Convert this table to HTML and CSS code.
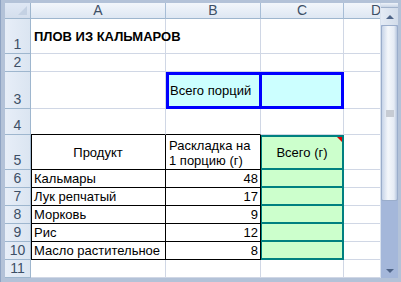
FILE: index.html
```html
<!DOCTYPE html>
<html>
<head>
<meta charset="utf-8">
<link rel="stylesheet" href="styles.css">
</head>
<body>
<div class="window">
  <div class="sheet">
    <div class="corner"><span class="tri"></span></div>
    <div class="ch">A</div>
    <div class="ch">B</div>
    <div class="ch">C</div>
    <div class="ch chd">D</div>

    <div class="rh r1">1</div>
    <div class="c title">ПЛОВ ИЗ КАЛЬМАРОВ</div>
    <div class="c"></div>
    <div class="c"></div>
    <div class="c"></div>

    <div class="rh">2</div>
    <div class="c"></div>
    <div class="c"></div>
    <div class="c"></div>
    <div class="c"></div>

    <div class="rh">3</div>
    <div class="c"></div>
    <div class="c blue bl">Всего порций</div>
    <div class="c blue br"></div>
    <div class="c"></div>

    <div class="rh">4</div>
    <div class="c bb"></div>
    <div class="c bb"></div>
    <div class="c"></div>
    <div class="c"></div>

    <div class="rh">5</div>
    <div class="c t ta center">Продукт</div>
    <div class="c t wrap">Раскладка на 1 порцию (г)</div>
    <div class="c g gtop center">Всего (г)<span class="note"></span></div>
    <div class="c"></div>

    <div class="rh">6</div>
    <div class="c t ta">Кальмары</div>
    <div class="c t num">48</div>
    <div class="c g"></div>
    <div class="c"></div>

    <div class="rh">7</div>
    <div class="c t ta">Лук репчатый</div>
    <div class="c t num">17</div>
    <div class="c g"></div>
    <div class="c"></div>

    <div class="rh">8</div>
    <div class="c t ta">Морковь</div>
    <div class="c t num">9</div>
    <div class="c g"></div>
    <div class="c"></div>

    <div class="rh">9</div>
    <div class="c t ta">Рис</div>
    <div class="c t num">12</div>
    <div class="c g"></div>
    <div class="c"></div>

    <div class="rh">10</div>
    <div class="c t ta">Масло растительное</div>
    <div class="c t num">8</div>
    <div class="c g"></div>
    <div class="c"></div>

    <div class="rh">11</div>
    <div class="c"></div>
    <div class="c"></div>
    <div class="c"></div>
    <div class="c"></div>
  </div>
  <div class="scroll">
    <div class="split"></div>
    <div class="btn up"><span class="arr-up"></span></div>
    <div class="thumb"><span class="grip"></span></div>
    <div class="track"></div>
    <div class="btn down"><span class="arr-down"></span></div>
  </div>
</div>
</body>
</html>
```
FILE: styles.css
```css
* { box-sizing: border-box; }
html, body { margin: 0; padding: 0; }
body { width: 401px; height: 282px; overflow: hidden; background: #fff; }

.window {
  width: 401px; height: 282px;
  display: flex;
  padding: 3px 3px 4px 4px;
  background: #b3c2d8;
  border-left: 1px solid #8ea3c3;
  overflow: hidden;
}

.sheet {
  width: 377px;
  display: grid;
  grid-template-columns: 26px 135px 95px 83px 38px;
  grid-template-rows: 16px 35px 18px 37px 26px 35px 18px 18px 18px 18px 18px 18px;
  background: #fff;
  font-family: "Liberation Sans", Arial, sans-serif;
  font-size: 13px;
  color: #000;
  overflow: hidden;
}

.corner {
  background: linear-gradient(#dfe8f5, #d4deed);
  border-right: 1px solid #9eb6ce;
  border-bottom: 1px solid #9eb6ce;
  position: relative;
}
.tri {
  position: absolute; right: 3px; bottom: 3px;
  width: 0; height: 0;
  border-left: 9px solid transparent;
  border-bottom: 9px solid #c4d1e3;
}

.ch {
  background: linear-gradient(#f2f6fb, #dee7f3);
  border-right: 1px solid #a7bdd6;
  border-bottom: 1px solid #9eb6ce;
  color: #3d4f66;
  font-size: 14px;
  text-align: center;
  line-height: 15px;
}
.chd { text-align: right; padding-right: 1px; border-right: none; }

.rh {
  background: linear-gradient(90deg, #e7eef8, #dbe5f1);
  border-right: 1px solid #9eb6ce;
  border-bottom: 1px solid #9eb6ce;
  color: #3d4f66;
  font-size: 14px;
  display: flex;
  align-items: flex-end;
  justify-content: center;
  line-height: 16px;
  padding-bottom: 1px;
}

.c {
  border-right: 1px solid #d0d7e5;
  border-bottom: 1px solid #d0d7e5;
  padding: 0 3px;
  white-space: nowrap;
  display: flex;
  align-items: center;
  line-height: 15px;
  position: relative;
}
.title { font-weight: bold; font-size: 13px; overflow: visible; }

.blue { background: #ccffff; }
.bl { box-shadow: inset 3px 0 #0000ff, inset 0 3px #0000ff, inset 0 -2px #0000ff, inset -1px 0 #0000ff; border-right-color: #0000ff; border-bottom-color: #0000ff; padding-left: 4px; }
.br { box-shadow: inset 1px 0 #0000ff, inset 0 3px #0000ff, inset 0 -2px #0000ff, inset -2px 0 #0000ff; border-right-color: #0000ff; border-bottom-color: #0000ff; }

.bb { border-bottom-color: #000; }

.t { border-right-color: #000; border-bottom-color: #000; }
.ta { box-shadow: inset 1px 0 #000; }
.center { justify-content: center; }
.wrap { white-space: normal; align-items: center; line-height: 15px; padding-top: 1px; }
.num { justify-content: flex-end; padding-right: 2px; }

.g {
  background: #ccffcc;
  border-right: 1px solid #008080;
  border-bottom: 2px solid #008080;
  box-shadow: inset 1px 0 #008080, inset -1px 0 #008080;
}
.gtop { box-shadow: inset 1px 0 #008080, inset -1px 0 #008080, inset 0 1px #008080; border-top: 1px solid #008080; }
.note {
  position: absolute; right: 1px; top: 1px;
  width: 0; height: 0;
  border-left: 5px solid transparent;
  border-top: 5px solid #e00000;
}

.scroll {
  width: 18px;
  display: flex;
  flex-direction: column;
  background: #a4b7da;
  border-left: 1px solid #d9e2ee;
}
.split { height: 5px; background: linear-gradient(#eef3f9, #c9d5e6); border-bottom: 1px solid #a2b3cc; }
.btn { height: 17px; display: flex; align-items: center; justify-content: center; background: linear-gradient(90deg, #e4ebf5, #d2dcea); }
.arr-up { width: 0; height: 0; border-left: 4px solid transparent; border-right: 4px solid transparent; border-bottom: 4px solid #4e6488; }
.arr-down { width: 0; height: 0; border-left: 4px solid transparent; border-right: 4px solid transparent; border-top: 4px solid #4e6488; }
.thumb {
  height: 176px;
  background: linear-gradient(90deg, #c7d4e8, #f4f7fb 40%, #e6ecf5 80%, #b6c6de);
  border: 1px solid #9aadcb;
  border-radius: 2px;
  display: flex; align-items: center; justify-content: center;
}
.grip { width: 8px; height: 7px; background: #c6cbd3; }
.track { flex: 1; background: #a4b7da; }
.btn.down { background: #a4b7da; height: 14px; }
```
